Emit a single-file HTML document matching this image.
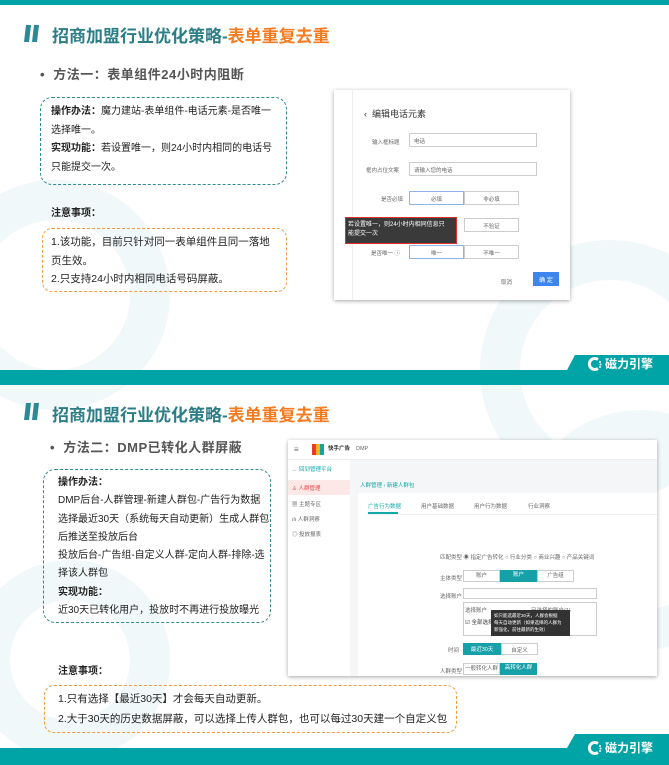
<!DOCTYPE html>
<html><head><meta charset="utf-8"><style>
*{margin:0;padding:0;box-sizing:border-box}
body{width:669px;height:765px;position:relative;overflow:hidden;background:#fff;font-family:"Liberation Sans","Noto Sans CJK SC",sans-serif;color:#222}
.a{position:absolute}
.t{font-size:17px;font-weight:bold;color:#2b7d86;white-space:nowrap}
.t span{color:#f47b20}
.bul{font-size:13px;font-weight:bold;color:#555;white-space:nowrap;letter-spacing:.5px}
.box{border:1.5px dashed #2f8a93;border-radius:12px}
.ob{border:1.5px dashed #f39a3c;border-radius:10px}
.tx{font-size:10px;line-height:18.5px;white-space:nowrap;color:#222}
.bar{background:#00a4a6;left:0;width:669px}
.tab{background:#00a4a6;clip-path:polygon(8px 0,100% 0,100% 100%,0 100%)}
.circ{border-radius:50%;border:40px solid #f1f8f9}
.card{background:#fff;box-shadow:0 1px 4px rgba(0,0,0,.35);overflow:hidden}
.s{font-size:5.5px;color:#666;white-space:nowrap}
.btn{border:1px solid #ccc;font-size:5.5px;color:#666;text-align:center}
.logo{color:#fff;font-size:12px;font-weight:bold;white-space:nowrap;display:flex;align-items:center;gap:3px}
</style></head><body>
<div class="a circ" style="left:-60px;top:180px;width:230px;height:230px"></div>
<div class="a circ" style="left:480px;top:240px;width:260px;height:260px"></div>
<div class="a circ" style="left:-30px;top:560px;width:200px;height:200px"></div>
<div class="a circ" style="left:520px;top:410px;width:240px;height:240px"></div>

<!-- slide 1 -->
<div class="a bar" style="top:0;height:5px"></div>
<svg class="a" style="left:24px;top:25px" width="16" height="17"><polygon points="2,0 7,0 5,17 0,17" fill="#2b8a93"/><polygon points="10,0 15,0 13,17 8,17" fill="#2b8a93"/></svg>
<div class="a t" style="left:52px;top:22px">招商加盟行业优化策略-<span>表单重复去重</span></div>
<div class="a bul" style="left:40px;top:64px">•&nbsp;&nbsp;方法一：表单组件24小时内阻断</div>
<div class="a box" style="left:40px;top:97px;width:247px;height:88px"></div>
<div class="a tx" style="left:51px;top:103px"><b>操作办法：</b>魔力建站-表单组件-电话元素-是否唯一<br>选择唯一。<br><b>实现功能：</b>若设置唯一，则24小时内相同的电话号<br>只能提交一次。</div>
<div class="a tx" style="left:51px;top:205px;font-weight:bold">注意事项：</div>
<div class="a ob" style="left:42px;top:228px;width:245px;height:64px"></div>
<div class="a tx" style="left:51px;top:233px;font-size:10.5px">1.该功能，目前只针对同一表单组件且同一落地<br>页生效。<br>2.只支持24小时内相同电话号码屏蔽。</div>

<div class="a card" style="left:334px;top:90px;width:236px;height:210px">
 <div class="a" style="left:0;top:0;width:19px;height:210px;border-right:1px solid #eee"></div>
 <div class="a" style="left:30px;top:17px;font-size:9px;color:#333">‹&nbsp;&nbsp;编辑电话元素</div>
 <div class="a s" style="left:38px;top:48px">输入框标题</div>
 <div class="a btn" style="left:75px;top:43px;width:128px;height:14px;text-align:left;padding:3px 4px">电话</div>
 <div class="a s" style="left:32px;top:76px">框内占位文案</div>
 <div class="a btn" style="left:75px;top:72px;width:128px;height:14px;text-align:left;padding:3px 4px">请输入您的电话</div>
 <div class="a s" style="left:47px;top:105px">是否必填</div>
 <div class="a btn" style="left:75px;top:101px;width:55px;height:14px;padding-top:3px;border-color:#8fb3e8">必填</div>
 <div class="a btn" style="left:130px;top:101px;width:55px;height:14px;padding-top:3px">非必填</div>
 <div class="a btn" style="left:130px;top:128px;width:55px;height:14px;padding-top:3px">不验证</div>
 <div class="a s" style="left:37px;top:159px">是否唯一 ⓘ</div>
 <div class="a btn" style="left:75px;top:155px;width:55px;height:14px;padding-top:3px;border-color:#8fb3e8">唯一</div>
 <div class="a btn" style="left:130px;top:155px;width:55px;height:14px;padding-top:3px">不唯一</div>
 <div class="a s" style="left:167px;top:188px">取消</div>
 <div class="a" style="left:199px;top:182px;width:26px;height:14px;background:#3d86f0;color:#fff;font-size:6px;text-align:center;padding-top:3px">确 定</div>
</div>
<div class="a" style="left:345px;top:217px;width:112px;height:27px;background:#3a3a3a;border:1.5px solid #e0302a;color:#fff;font-size:6px;line-height:9px;padding:3px 2px">若设置唯一，则24小时内相同信息只<br>能提交一次</div>

<div class="a bar" style="top:370px;height:15px"></div>
<div class="a tab" style="left:567px;top:355px;width:102px;height:15px"></div>
<div class="a logo" style="left:588px;top:355px">
<svg width="14" height="14" viewBox="0 0 14 14"><path d="M10 2.5A5.5 5.5 0 1 0 10 11.5" stroke="#fff" stroke-width="3" fill="none"/><circle cx="12" cy="5" r="1" fill="#fff"/><circle cx="12.5" cy="7.5" r="1" fill="#fff"/><circle cx="12" cy="10" r="1" fill="#fff"/></svg>磁力引擎</div>

<!-- slide 2 -->
<svg class="a" style="left:24px;top:403px" width="16" height="17"><polygon points="2,0 7,0 5,17 0,17" fill="#2b8a93"/><polygon points="10,0 15,0 13,17 8,17" fill="#2b8a93"/></svg>
<div class="a t" style="left:52px;top:401px">招商加盟行业优化策略-<span>表单重复去重</span></div>
<div class="a bul" style="left:50px;top:437px">•&nbsp;&nbsp;方法二：DMP已转化人群屏蔽</div>
<div class="a box" style="left:43px;top:469px;width:228px;height:154px"></div>
<div class="a tx" style="left:58px;top:474px;line-height:18.3px"><b>操作办法：</b><br>DMP后台-人群管理-新建人群包-广告行为数据<br>选择最近30天（系统每天自动更新）生成人群包<br>后推送至投放后台<br>投放后台-广告组-自定义人群-定向人群-排除-选<br>择该人群包<br><b>实现功能：</b><br>近30天已转化用户，投放时不再进行投放曝光</div>

<div class="a card" style="left:288px;top:440px;width:369px;height:236px;background:#f5f6f7">
 <div class="a" style="left:0;top:0;width:369px;height:20px;background:#fff;border-bottom:1px solid #eee"></div>
 <div class="a s" style="left:6px;top:5px;font-size:8px">≡</div>
 <div class="a" style="left:24px;top:4px;width:12px;height:11px;background:linear-gradient(90deg,#e63b2e 33%,#f6b51e 33% 66%,#1aa39a 66%)"></div>
 <div class="a s" style="left:40px;top:4px;font-weight:bold;color:#333">快手广告</div>
 <div class="a s" style="left:68px;top:6px">DMP</div>
 <div class="a" style="left:0;top:20px;width:62px;height:216px;background:#fff"></div>
 <div class="a" style="left:0;top:40px;width:62px;height:15px;background:#fde8e8"></div>
 <div class="a s" style="left:4px;top:25px;color:#1aa">← 回到管理平台</div>
 <div class="a s" style="left:4px;top:44px;color:#e44">♙ 人群管理</div>
 <div class="a s" style="left:4px;top:60px">▦ 主题专区</div>
 <div class="a s" style="left:4px;top:75px">ılı 人群洞察</div>
 <div class="a s" style="left:4px;top:90px">◎ 投放报表</div>
 <div class="a s" style="left:72px;top:41px;color:#1aa">人群管理 ‹ 新建人群包</div>
 <div class="a" style="left:70px;top:53px;width:299px;height:183px;background:#fff"></div>
 <div class="a s" style="left:80px;top:62px;color:#1aa">广告行为数据</div>
 <div class="a" style="left:80px;top:72px;width:30px;height:1.5px;background:#1aa"></div>
 <div class="a s" style="left:133px;top:62px">用户基础数据</div>
 <div class="a s" style="left:186px;top:62px">用户行为数据</div>
 <div class="a s" style="left:240px;top:62px">行业洞察</div>
 <div class="a" style="left:80px;top:74px;width:289px;height:1px;background:#eee"></div>
 <div class="a s" style="left:152px;top:113px">匹配类型 ◉ 指定广告转化 ○ 行业分类 ○ 商业兴趣 ○ 产品关键词</div>
 <div class="a s" style="left:152px;top:134px">主体类型</div>
 <div class="a btn" style="left:175px;top:130px;width:37px;height:12px">账户</div>
 <div class="a" style="left:212px;top:130px;width:37px;height:12px;background:#16a0a8;color:#fff;font-size:5.5px;text-align:center">账户</div>
 <div class="a btn" style="left:249px;top:130px;width:37px;height:12px">广告组</div>
 <div class="a s" style="left:152px;top:152px">选择账户</div>
 <div class="a btn" style="left:175px;top:148px;width:134px;height:11px"></div>
 <div class="a btn" style="left:175px;top:162px;width:134px;height:34px"></div>
 <div class="a s" style="left:177px;top:166px">选择账户</div>
 <div class="a s" style="left:243px;top:166px">已选择的账户(1)</div>
 <div class="a s" style="left:177px;top:178px;color:#333">☑ 全部选择</div>
 <div class="a" style="left:203px;top:170px;width:79px;height:26px;background:#333;color:#fff;font-size:4.5px;line-height:7px;padding:2px 3px;white-space:nowrap">如只能选最近30天，人群会根据<br>每天自动更新（如果选择的人群为<br>新强化，前往最新的生效）</div>
 <div class="a s" style="left:160px;top:206px">时间</div>
 <div class="a" style="left:175px;top:203px;width:38px;height:12px;background:#16a0a8;color:#fff;font-size:5.5px;text-align:center;padding-top:2px">最近30天</div>
 <div class="a btn" style="left:213px;top:203px;width:37px;height:12px;padding-top:2px">自定义</div>
 <div class="a s" style="left:152px;top:227px">人群类型</div>
 <div class="a btn" style="left:175px;top:223px;width:37px;height:12px">一般转化人群</div>
 <div class="a" style="left:212px;top:223px;width:37px;height:12px;background:#16a0a8;color:#fff;font-size:5.5px;text-align:center">高转化人群</div>
</div>

<div class="a tx" style="left:58px;top:663px;font-weight:bold">注意事项：</div>
<div class="a ob" style="left:44px;top:685px;width:413px;height:48px"></div>
<div class="a tx" style="left:58px;top:689px;line-height:20px;font-size:10.5px">1.只有选择【最近30天】才会每天自动更新。<br>2.大于30天的历史数据屏蔽，可以选择上传人群包，也可以每过30天建一个自定义包</div>

<div class="a bar" style="top:748px;height:17px"></div>
<div class="a tab" style="left:567px;top:734px;width:102px;height:14px"></div>
<div class="a logo" style="left:588px;top:739px">
<svg width="14" height="14" viewBox="0 0 14 14"><path d="M10 2.5A5.5 5.5 0 1 0 10 11.5" stroke="#fff" stroke-width="3" fill="none"/><circle cx="12" cy="5" r="1" fill="#fff"/><circle cx="12.5" cy="7.5" r="1" fill="#fff"/><circle cx="12" cy="10" r="1" fill="#fff"/></svg>磁力引擎</div>
</body></html>
